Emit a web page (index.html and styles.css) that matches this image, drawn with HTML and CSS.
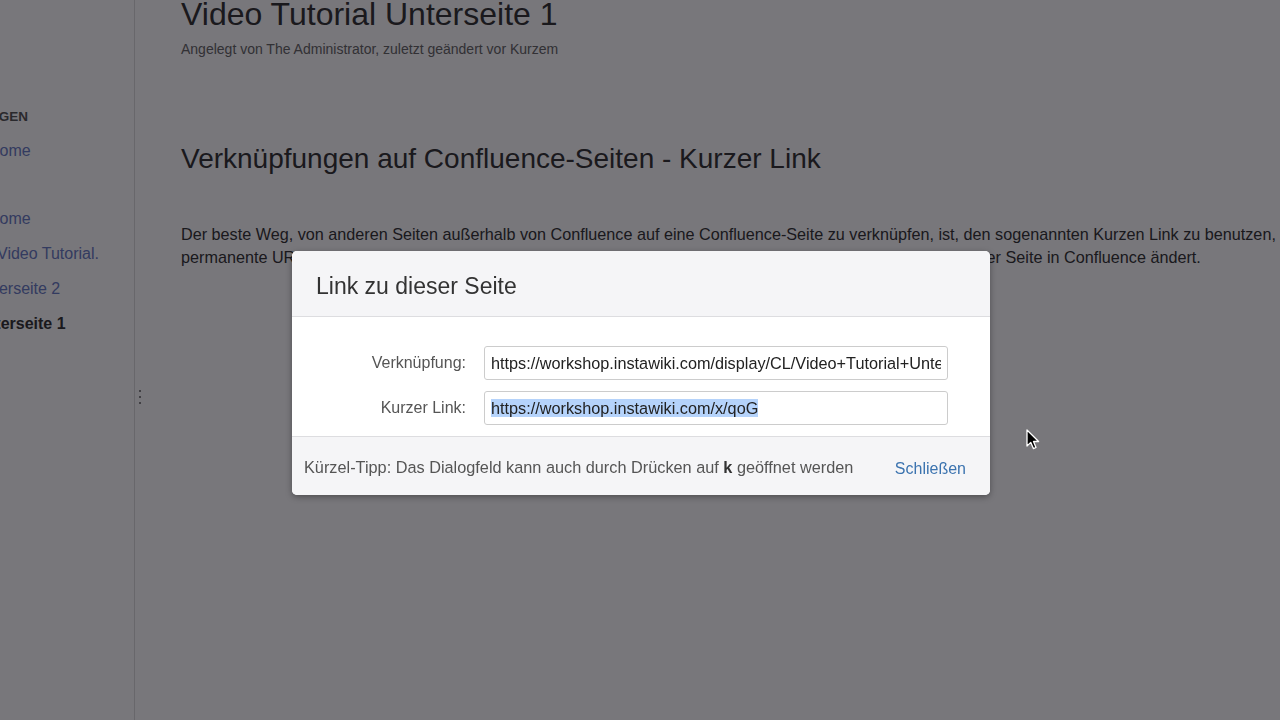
FILE: index.html
```html
<!DOCTYPE html>
<html lang="de">
<head>
  <meta charset="UTF-8" />
  <meta name="viewport" content="width=device-width, initial-scale=1.0"/>
  <title>Video Tutorial Unterseite 1</title>
  <link rel="stylesheet" href="styles.css">
</head>
<body>
  <div class="page">
    <aside class="sidebar">
      <div class="side-heading">Verknüpfungen</div>
      <a class="side-link lvl-0" href="#">Home</a>
      <ul class="tree">
        <li><a class="lvl-0" href="#">Home</a></li>
        <li><a class="lvl-1" href="#">Video Tutorial.</a></li>
        <li><a class="lvl-2" href="#">Unterseite 2</a></li>
        <li><a class="lvl-2 current" href="#">Unterseite 1</a></li>
      </ul>
      <div class="grip"><span></span><span></span><span></span></div>
    </aside>

    <main class="content">
      <h1 class="page-title">Video Tutorial Unterseite 1</h1>
      <div class="byline">Angelegt von The Administrator, zuletzt geändert vor Kurzem</div>

      <h2>Verknüpfungen auf Confluence-Seiten - Kurzer Link</h2>
      <p class="intro">
        <span>Der beste Weg, von anderen Seiten außerhalb von Confluence auf eine Confluence-Seite zu verknüpfen, ist, den sogenannten Kurzen Link zu benutzen, der eine</span>
        <span>permanente URL ist, die sich auch dann nicht ändert, wenn sich der Titel oder auch der Speicherort im Bereich der Seite in Confluence ändert.</span>
      </p>
    </main>
  </div>

  <!-- modal -->
  <div class="blanket"></div>
  <section class="dialog">
    <header class="dialog-header">
      <h3>Link zu dieser Seite</h3>
    </header>
    <div class="dialog-body">
      <form class="link-form">
        <label>Verknüpfung:</label>
        <div class="field"><span class="value">https://workshop.instawiki.com/display/CL/Video+Tutorial+Unterseite+1</span></div>
        <label>Kurzer Link:</label>
        <div class="field"><span class="value"><span class="selected">https://workshop.instawiki.com/x/qoG</span></span></div>
      </form>
    </div>
    <footer class="dialog-footer">
      <span class="hint">Kürzel-Tipp: Das Dialogfeld kann auch durch Drücken auf <b>k</b> geöffnet werden</span>
      <a class="close-link" href="#">Schließen</a>
    </footer>
  </section>

  <svg class="cursor" width="14" height="22" viewBox="0 0 14 22">
    <path d="M1 1 L1 17 L4.8 13.4 L7.4 19.6 L10 18.5 L7.5 12.5 L12.6 12.5 Z" fill="#000" stroke="#fff" stroke-width="1.3" stroke-linejoin="round"/>
  </svg>
</body>
</html>
```

FILE: styles.css
```css
html, body {
  margin: 0;
  height: 100%;
  overflow: hidden;
}
body {
  font-family: "Liberation Sans", Arial, sans-serif;
  background-color: #fff;
  color: #333;
}
.page {
  display: flex;
  height: 720px;
}

/* sidebar */
.sidebar {
  position: relative;
  width: 134px;
  flex-shrink: 0;
  border-right: 1px solid #dcdcdc;
  padding-top: 107px;
  font-size: 16px;
}
.side-heading {
  font-size: 13.5px;
  font-weight: bold;
  text-transform: uppercase;
  color: #555;
  line-height: 20px;
  margin-left: -95px;
  white-space: nowrap;
}
.sidebar a {
  display: block;
  color: #6a7cc4;
  text-decoration: none;
  line-height: 20px;
  white-space: nowrap;
}
.side-link {
  margin-top: 14px;
}
.tree {
  list-style: none;
  margin: 48px 0 0;
  padding: 0;
}
.tree li {
  height: 35px;
}
.lvl-0 { margin-left: -12px; }
.lvl-1 { margin-left: -3px; }
.lvl-2 { margin-left: -26px; }
.sidebar a.current {
  color: #333;
  font-weight: bold;
}
.grip {
  position: absolute;
  left: 139px;
  top: 390px;
  display: flex;
  flex-direction: column;
  gap: 4px;
}
.grip span {
  width: 2px;
  height: 2px;
  background-color: #888;
}

/* content */
.content {
  flex: 1;
  padding-left: 46px;
  min-width: 0;
}
.page-title {
  font-size: 32px;
  font-weight: normal;
  line-height: 32px;
  margin: -2px 0 0;
  color: #333;
}
.byline {
  font-size: 14px;
  line-height: 20px;
  color: #666;
  margin-top: 9px;
}
h2 {
  font-size: 28px;
  font-weight: normal;
  line-height: 34px;
  margin: 83px 0 0;
  color: #333;
}
.intro {
  font-size: 16.2px;
  line-height: 23px;
  margin: 47px 0 0;
  width: 1300px;
}
.intro span {
  display: block;
  white-space: nowrap;
}

/* modal */
.blanket {
  position: fixed;
  inset: 0;
  background-color: rgba(5, 3, 12, 0.54);
}
.dialog {
  position: fixed;
  left: 292px;
  top: 251px;
  width: 698px;
  background-color: #fff;
  border-radius: 5px;
  box-shadow: 0 2px 6px rgba(0, 0, 0, 0.35);
  overflow: hidden;
}
.dialog-header {
  background-color: #f5f5f7;
  border-bottom: 1px solid #dddde0;
  height: 66px;
  display: flex;
  align-items: center;
  padding: 6px 24px 0;
  box-sizing: border-box;
}
.dialog-header h3 {
  margin: 0;
  font-size: 23px;
  font-weight: normal;
  color: #333;
}
.dialog-body {
  padding: 29px 0 11px 24px;
}
.link-form {
  display: grid;
  grid-template-columns: 150px 464px;
  grid-auto-rows: 34px;
  column-gap: 18px;
  row-gap: 11px;
  align-items: center;
  margin: 0;
}
.link-form label {
  text-align: right;
  font-size: 16px;
  color: #555;
}
.field {
  box-sizing: border-box;
  height: 34px;
  border: 1px solid #ccc;
  border-radius: 3px;
  padding: 0 6px;
  font-size: 16.25px;
  line-height: 33px;
  color: #222;
}
.value {
  display: block;
  white-space: nowrap;
  overflow: hidden;
}
.selected {
  background-color: #b5d3fb;
}
.dialog-footer {
  background-color: #f5f5f7;
  border-top: 1px solid #dddde0;
  height: 59px;
  display: flex;
  align-items: center;
  justify-content: space-between;
  padding: 2px 24px 0 12px;
  box-sizing: border-box;
  font-size: 16px;
}
.hint {
  color: #555;
  font-size: 16.3px;
}
.hint b {
  color: #333;
}
.close-link {
  color: #3b73af;
  text-decoration: none;
  margin-top: 4px;
}

.cursor {
  position: fixed;
  left: 1026px;
  top: 429px;
}
```
